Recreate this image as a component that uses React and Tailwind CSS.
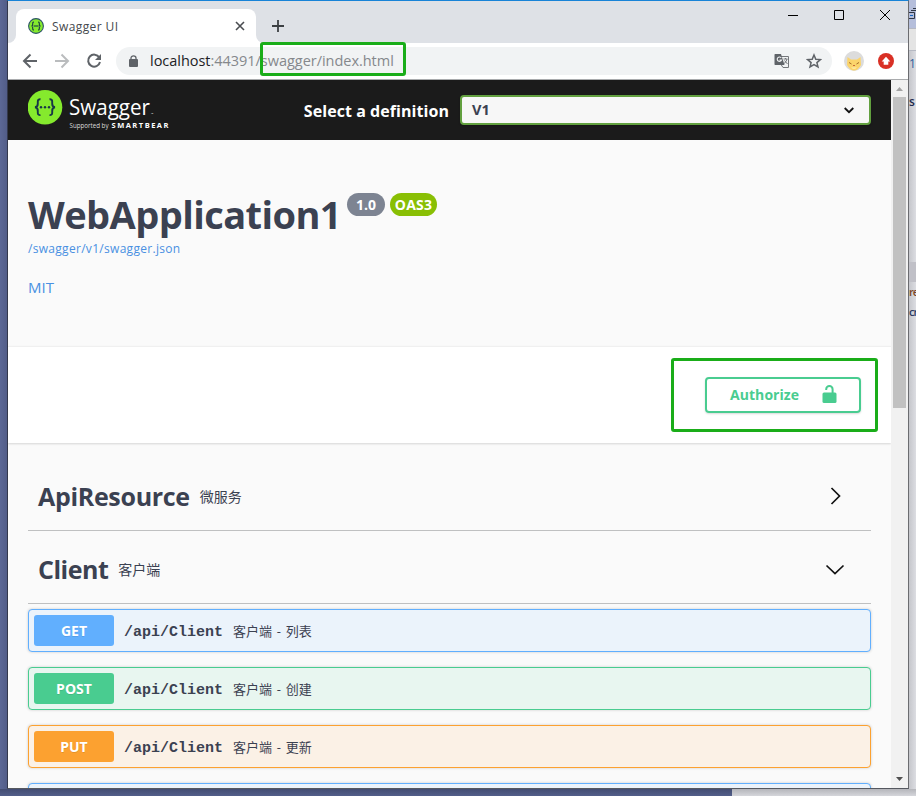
import React from "react";

const ui = "font-['Open_Sans','Noto_Sans_CJK_SC',sans-serif]";

function Op({ method, tone, badge, text }) {
  return (
    <div className={`flex h-[43px] shrink-0 items-center rounded-[4px] border p-[5px] shadow-[0_0_3px_rgba(0,0,0,0.19)] ${tone}`}>
      <div className={`flex h-[31px] w-20 items-center justify-center rounded-[3px] text-[14px] font-bold text-white [text-shadow:0_1px_0_rgba(0,0,0,0.1)] ${badge}`}>
        {method}
      </div>
      <span className="ml-[10px] pt-[5px] font-['Liberation_Mono',monospace] text-[15px] font-bold">/api/Client</span>
      <span className="ml-[10px] pt-[2px] text-[13px] [word-spacing:1.4px]">{text}</span>
    </div>
  );
}

function Section({ name, nameClass, desc, open }) {
  return (
    <div className="flex h-[73px] shrink-0 items-center border-b border-[#bfc0c1] pl-[10px] pr-[25px] pt-[5px]">
      <h3 className={`text-[25px] font-bold leading-none ${nameClass}`}>{name}</h3>
      <span className="ml-[10px] text-[14px]">{desc}</span>
      <svg className="ml-auto h-[22px] w-[22px]" viewBox="0 0 22 22" fill="none" stroke="#111" strokeWidth="1.7">
        <path d={open ? "M2.5 6.5 11 14.5 19.5 6.5" : "M7.5 2 15.5 10 7.5 18"} />
      </svg>
    </div>
  );
}

function TabStrip() {
  return (
    <div className="flex h-[42px] shrink-0 bg-[#dee1e6]">
      <div className="flex w-2 items-end bg-white">
        <div className="h-full w-full rounded-br-[8px] bg-[#dee1e6]" />
      </div>
      <div className="w-60 bg-[#dee1e6] pt-2">
        <div className="flex h-[34px] items-center rounded-t-[8px] bg-white pl-3 pr-[11px]">
          <svg className="h-4 w-4" viewBox="0 0 16 16">
            <circle cx="8" cy="8" r="7.4" fill="#85ea2d" stroke="#2d5468" strokeWidth="1.1" />
            <path d="M6 4C4.6 4 4.7 5 4.7 6.2 4.7 7.3 4.4 8 3.4 8c1 0 1.3.7 1.3 1.8C4.7 11 4.6 12 6 12M10 4c1.4 0 1.3 1 1.3 2.2 0 1.1.3 1.8 1.3 1.8-1 0-1.3.7-1.3 1.8 0 1.2.1 2.2-1.3 2.2" fill="none" stroke="#173647" strokeWidth="1.1" />
            <path d="M5.6 8h5" stroke="#173647" strokeWidth="1.1" />
          </svg>
          <span className="ml-2 pt-[2px] text-[12px] tracking-[0.4px] text-[#45494d]">Swagger UI</span>
          <svg className="ml-auto h-[10px] w-[10px]" viewBox="0 0 10 10" stroke="#4a4d51" strokeWidth="1.6">
            <path d="M1 1 9 9M9 1 1 9" />
          </svg>
        </div>
      </div>
      <div className="w-2 bg-white">
        <div className="h-full w-full rounded-bl-[8px] bg-[#dee1e6]" />
      </div>
      <svg className="ml-2 mt-[19px] h-3 w-3" viewBox="0 0 12 12" stroke="#3c4043" strokeWidth="1.8">
        <path d="M6 0V12M0 6H12" />
      </svg>
      <svg className="ml-auto mr-[17px] mt-[8px] h-3 w-[103px]" viewBox="0 0 103 12" fill="none" stroke="#000" strokeWidth="1">
        <path d="M0 6.5H10" />
        <path d="M46.5 1.5H55.5V10.5H46.5Z" />
        <path d="M92 1 102 11M102 1 92 11" />
      </svg>
    </div>
  );
}

function Toolbar() {
  return (
    <div className="flex h-[37px] shrink-0 items-center border-b border-[#a9abad] bg-white pl-[14px] pr-[14px]">
      <svg className="h-4 w-4" viewBox="0 0 16 16" fill="none" stroke="#5f6368" strokeWidth="2">
        <path d="M15 8H2.5M8.5 1.5 2 8l6.500 6.500" />
      </svg>
      <svg className="ml-4 h-4 w-4" viewBox="0 0 16 16" fill="none" stroke="#babcbe" strokeWidth="2">
        <path d="M1 8H13.5M7.500 1.500 14 8l-6.500 6.500" />
      </svg>
      <svg className="ml-4 h-4 w-4" viewBox="0 0 16 16" fill="none" stroke="#5f6368" strokeWidth="2">
        <path d="M13.300 4.500A6 6 0 1 0 14 9" />
        <path d="M15 1V7H9Z" fill="#5f6368" stroke="none" />
      </svg>
      <div className="ml-[14px] flex h-7 w-[716px] items-center rounded-full bg-[#f1f3f4] pl-[13px] pr-[10px]">
        <svg className="h-3 w-[9px]" viewBox="0 0 9 12">
          <rect y="4" width="9" height="8" rx="1" fill="#5f6368" />
          <path d="M2 5V3a2.500 2.200 0 0 1 5 0V5" fill="none" stroke="#5f6368" strokeWidth="1.300" />
        </svg>
        <span className="ml-3 text-[14.5px] leading-none tracking-[-0.03px] text-[#85888c]">
          <span className="text-[#202124]">localhost</span>:44391/swagger/index.html
        </span>
        <svg className="ml-auto h-4 w-4" viewBox="0 0 16 16">
          <path d="M6 3.500H14.500V14.500H9L6 10Z" fill="#f1f3f4" stroke="#74777b" />
          <path d="M1 1H7L10.500 12H1Q.5 12 .5 11V2Q.5 1 1 1Z" fill="#5f6368" />
          <path d="M7.300 5A2.200 2.200 0 1 0 7.500 7H5.500" fill="none" stroke="#f1f3f4" strokeWidth="1.100" />
          <path d="M9.500 6H13.500M11.500 5V6M13 6Q12.500 9 10 10.500M10.500 7.500 13.500 11" fill="none" stroke="#74777b" />
        </svg>
        <svg className="ml-4 h-4 w-4" viewBox="0 0 16 16" fill="none" stroke="#5f6368" strokeWidth="1.500">
          <path d="M8 2 9.800 6.200 14.400 6.600 10.900 9.600 12 14 8 11.600 4 14 5.100 9.600 1.600 6.600 6.200 6.200Z" />
        </svg>
      </div>
      <svg className="ml-3 h-5 w-5" viewBox="0 0 20 20">
        <circle cx="10" cy="10" r="10" fill="#dcdcdc" />
        <path d="M3.500 6 7 8.500H13L16.500 6 17 14Q14 19.500 10 19.500T3 14Z" fill="#fbd46b" />
        <path d="M5 11.500 7.500 13M15 11.500 12.500 13" stroke="#a66e2a" />
        <path d="M9 14.500h2" stroke="#c76a3a" />
        <path d="M7 16.500Q10 19 13 16.500" fill="#fff0b8" />
      </svg>
      <svg className="ml-[14px] h-4 w-4" viewBox="0 0 16 16">
        <circle cx="8" cy="8" r="8" fill="#d93025" />
        <path d="M8 3.700 12.300 8.500H10.300V11.800H5.700V8.500H3.700Z" fill="#fff" />
      </svg>
    </div>
  );
}

function Header() {
  return (
    <div className="flex h-[60px] shrink-0 items-center bg-[#1b1b1b] pl-5 pr-5">
      <svg className="h-10 w-[142px] font-['Open_Sans',sans-serif]" viewBox="0 0 142 40">
        <circle cx="17" cy="17.300" r="17.300" fill="#85ea2d" />
        <g fill="none" stroke="#173647" strokeWidth="1.900">
          <path d="M12.500 9.300C9.500 9 9.700 11 9.800 13.500S9 17 7 17.200C9 17.400 9.900 18.500 9.800 21S9.500 25.400 12.500 25.100" />
          <path d="M21.500 9.300C24.500 9 24.300 11 24.200 13.500S25 17 27 17.200C25 17.400 24.100 18.500 24.200 21S24.500 25.400 21.500 25.100" />
        </g>
        <g fill="#173647">
          <circle cx="13" cy="17.200" r="1.200" /><circle cx="17" cy="17.200" r="1.200" /><circle cx="21" cy="17.200" r="1.200" />
        </g>
        <text x="41" y="24.500" fontSize="22.500" fill="#fff" textLength="81" lengthAdjust="spacingAndGlyphs">Swagger</text>
        <text x="123" y="25" fontSize="3" fill="#fff">™</text>
        <text x="41.500" y="38" fontSize="7" fill="#ddd" textLength="39" lengthAdjust="spacingAndGlyphs">Supported by</text>
        <text x="83.500" y="38" fontSize="7.500" fontWeight="700" fill="#fff" textLength="57">SMARTBEAR</text>
      </svg>
      <span className="ml-auto pt-[2px] text-[16px] font-bold tracking-[0.06px] text-white">Select a definition</span>
      <div className="ml-[11px] flex h-[30px] w-[411px] items-center rounded-[4px] border-2 border-[#62a03f] bg-[#f7f7f7] pl-[10px] pr-[15px] shadow-[0_1px_2px_rgba(0,0,0,0.25)]">
        <span className="text-[14.5px] font-bold leading-none text-[#3b4151]">V1</span>
        <svg className="ml-auto h-[7px] w-[10px]" viewBox="0 0 10 7" fill="none" stroke="#111" strokeWidth="1.800">
          <path d="M.7 1 5 5.200 9.300 1" />
        </svg>
      </div>
    </div>
  );
}

function Page() {
  return (
    <div className="flex h-full w-[883px] flex-col overflow-hidden bg-[#fafafa] text-[#3b4151]">
      <Header />
      <div className="h-[206px] shrink-0 px-5 pt-[50px]">
        <div className="flex h-[49px] items-start">
          <h2 className="text-[38px] font-bold leading-[48px] tracking-[-0.57px]">WebApplication1</h2>
          <span className="ml-[6px] mt-[3px] flex h-[23px] w-[38px] items-center justify-center rounded-full bg-[#7d8492] text-[14px] font-bold text-white">1.0</span>
          <span className="ml-[5px] mt-[3px] flex h-[23px] w-[47px] items-center justify-center rounded-full bg-[#89bf04] text-[14px] font-bold tracking-[0.2px] text-white">OAS3</span>
        </div>
        <div className="text-[12px] leading-5 tracking-[0.3px] text-[#4990e2]">/swagger/v1/swagger.json</div>
        <div className="mt-[18px] text-[15px] leading-5 text-[#4990e2]">MIT</div>
      </div>
      <div className="flex h-[97px] shrink-0 items-center justify-end border-t border-[#f0f0f0] bg-white pr-[13px] shadow-[0_1px_2px_rgba(0,0,0,0.15)]">
        <div className="flex h-[74px] w-[207px] items-center justify-end rounded-[3px] border-[3px] border-[#1aad19] pr-[14px]">
          <div className="flex h-9 w-[156px] items-center rounded-[4px] border-2 border-[#49cc90] pl-[23px] pr-[22px] shadow-[0_1px_2px_rgba(0,0,0,0.15)]">
            <span className="pb-px text-[14px] font-bold tracking-[0.06px] text-[#49cc90]">Authorize</span>
            <svg className="mb-[2px] ml-auto h-[18px] w-[15px]" viewBox="0 0 15 18">
              <rect x=".5" y="7.500" width="14" height="10.500" rx="1.500" fill="#49cc90" />
              <path d="M4.200 5V4.200A3.200 3.200 0 0 1 10.600 4.200V8" fill="none" stroke="#49cc90" strokeWidth="2" />
            </svg>
          </div>
        </div>
      </div>
      <div className="flex flex-col px-5 pt-[15px]">
        <Section name="ApiResource" nameClass="tracking-[-0.32px]" desc="微服务" />
        <Section name="Client" nameClass="tracking-[-0.5px]" desc="客户端" open />
        <div className="flex flex-col gap-[15px] pt-[5px]">
          <Op method="GET" tone="border-[#61affe] bg-[#ebf3fb]" badge="bg-[#61affe]" text="客户端 - 列表" />
          <Op method="POST" tone="border-[#49cc90] bg-[#e8f6f0]" badge="bg-[#49cc90]" text="客户端 - 创建" />
          <Op method="PUT" tone="border-[#fca130] bg-[#fbf1e6]" badge="bg-[#fca130]" text="客户端 - 更新" />
          <div className="h-[43px] shrink-0 rounded-[4px] border border-[#61affe] bg-[#ebf3fb] shadow-[0_0_3px_rgba(0,0,0,0.19)]" />
        </div>
      </div>
    </div>
  );
}

function Scrollbar() {
  return (
    <div className="flex w-[17px] flex-col items-center bg-[#f1f1f1]">
      <svg className="h-[17px] w-[17px] shrink-0" viewBox="0 0 17 17"><path d="M5 11 8.500 7 12 11Z" fill="#a3a3a3" /></svg>
      <div className="h-[311px] w-[13px] shrink-0 bg-[#c1c1c1]" />
      <svg className="mt-auto h-[17px] w-[17px] shrink-0" viewBox="0 0 17 17"><path d="M5 6 8.500 10 12 6Z" fill="#505050" /></svg>
    </div>
  );
}

function Behind() {
  return (
    <div className="flex w-[7px] flex-col overflow-hidden bg-gradient-to-r from-[#c5c6cb] to-[#dcdde2] text-[12px] leading-none">
      <div className="h-7 shrink-0 bg-[#b5bedb]">
        <svg className="h-7 w-[7px]" viewBox="0 0 7 28" fill="none" stroke="#303846">
          <path d="M2 10.500H7M4 8.500H7M0 12.500H5.500V18.500H0" />
          <path d="M1 15.500H4" stroke="#1565c0" />
        </svg>
      </div>
      <div className="h-[23px] shrink-0 border-y border-[#b5b8c2] bg-[#e4e4e4]" />
      <div className="h-[29px] shrink-0 pt-[7px] text-[#2f5f9c]">1</div>
      <div className="mt-4 h-5 shrink-0 font-semibold text-[#1e2b4b]">s</div>
      <div className="mt-[146px] h-5 shrink-0 bg-[#c0c0c7]" />
      <div className="mt-1 h-5 shrink-0 text-[11px] font-semibold tracking-[-1px] text-[#7b4526]">re</div>
      <div className="h-5 shrink-0 text-[11px] font-semibold tracking-[-1px] text-[#2d3a61]">cr</div>
    </div>
  );
}

export default function App() {
  return (
    <div className={`relative h-[796px] w-[916px] overflow-hidden ${ui}`}>
      <div className="flex h-[789px]">
        <div className="w-[7px] bg-gradient-to-r from-[#5c6896] to-[#525d88]" />
        <div className="flex w-[902px] flex-col border border-t-[#1883d7] border-r-[#6b6c70] border-b-[#55585f] border-l-[#33384c] bg-white">
          <TabStrip />
          <Toolbar />
          <div className="flex min-h-0 flex-1">
            <Page />
            <Scrollbar />
          </div>
        </div>
        <Behind />
      </div>
      <div className="flex h-[7px]">
        <div className="w-[732px] bg-gradient-to-b from-[#434d72] to-[#525e8a]" />
        <div className="flex-1 bg-gradient-to-b from-[#b5b6bb] to-[#d5d6db]" />
      </div>
      <div className="absolute left-[260px] top-[42px] h-[34px] w-[146px] rounded-[3px] border-[3px] border-[#1aad19]" />
    </div>
  );
}
